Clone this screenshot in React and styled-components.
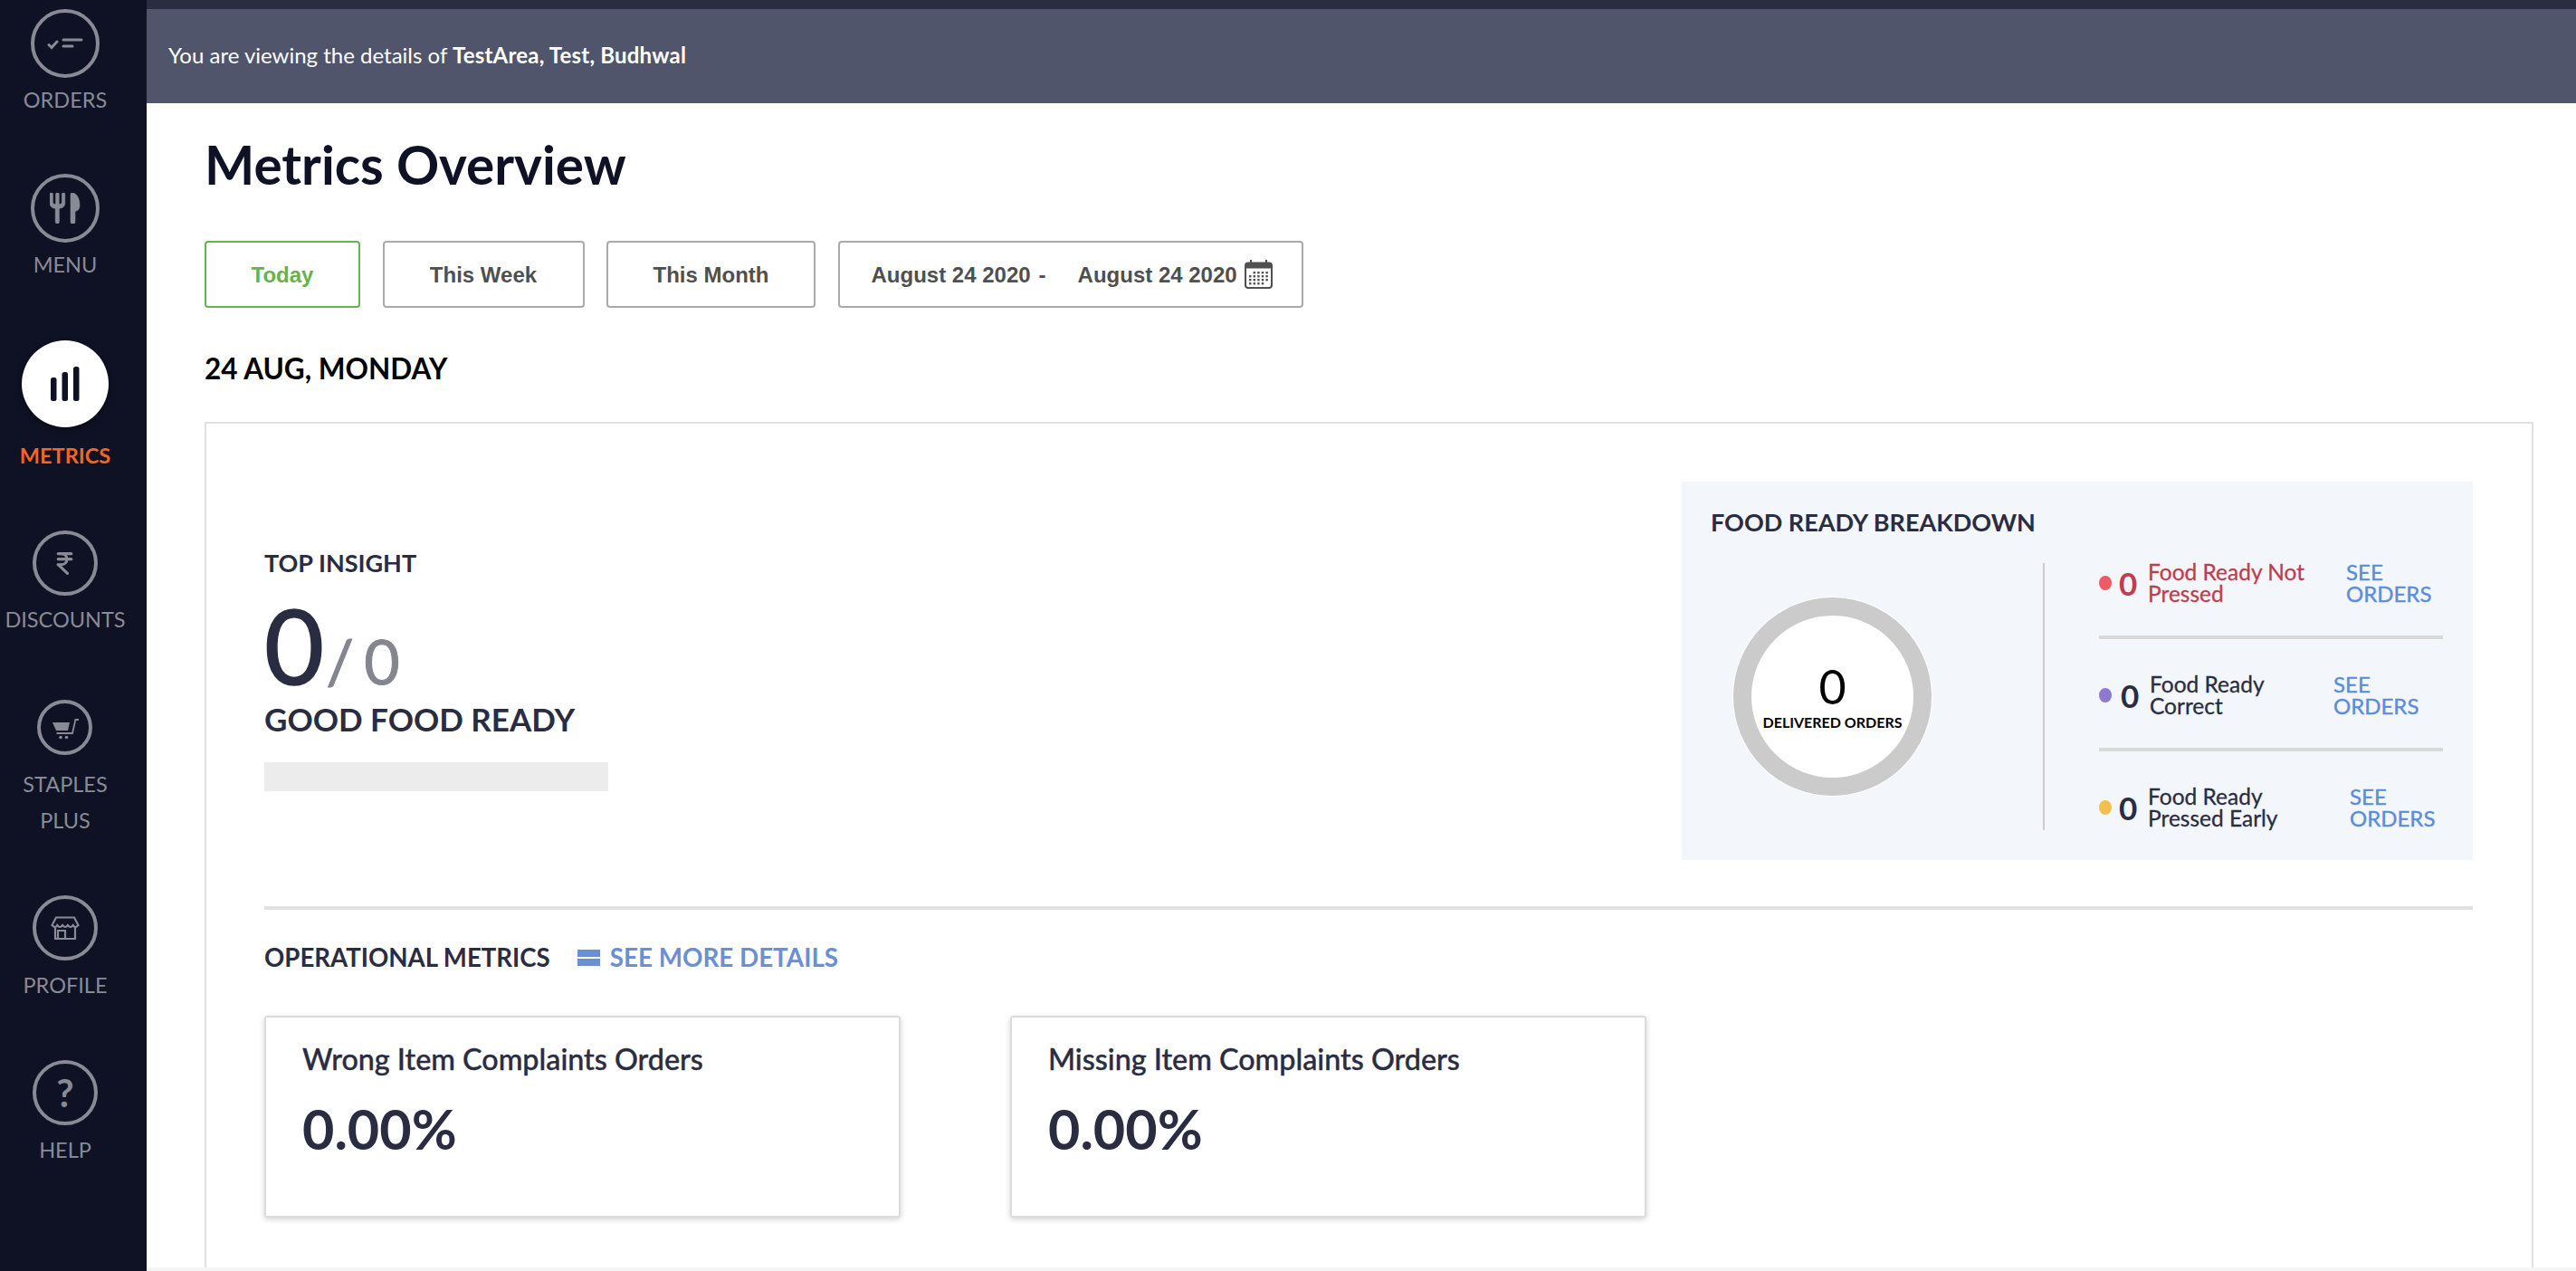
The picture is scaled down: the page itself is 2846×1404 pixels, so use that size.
import React from "react";
import styled, { createGlobalStyle } from "styled-components";
import { IndianRupee } from "lucide-react";

const SANS = `Lato, "Noto Sans", sans-serif`;
const ARIAL = `"Liberation Sans", Arial, sans-serif`;
const INK = "#2a2d42";
const NAV = "#888a95";
const LINK = "#5b8ddb";

const GlobalStyle = createGlobalStyle`
  html, body {
    margin: 0;
    padding: 0;
    background: #fff;
  }
  * {
    box-sizing: border-box;
  }
`;

function OrdersIcon() {
  return (
    <svg width="40" height="16" viewBox="0 0 40 16" fill="none" stroke={NAV} strokeLinecap="round">
      <path d="M2 9.5l3 3 6-6.5" strokeWidth="3" />
      <path d="M18 4h20M18 11h10" strokeWidth="3" />
    </svg>
  );
}

function MenuIcon() {
  return (
    <svg width="34" height="34" viewBox="0 0 34 34" fill={NAV} stroke={NAV} strokeWidth="0.6">
      <path d="M0 1.5a1.7 1.7 0 0 1 3.4 0V10c0 1.6.8 2.6 3.2 2.6V1.5a1.7 1.7 0 0 1 3.6 0v11.1c2.4 0 3.2-1 3.2-2.6V1.5a1.7 1.7 0 0 1 3.4 0V11c0 4-2.4 6-6.4 6.3V32a2.1 2.1 0 0 1-4.2 0V17.3C2.4 17 0 15 0 11z" />
      <path d="M23 1.5C23 .5 23.7 0 24.5 0 29.5 0 33 6 33 13.5c0 4.5-1.8 6.5-5 6.8V32a2.5 2.5 0 0 1-5 0z" />
    </svg>
  );
}

function MetricsIcon() {
  return (
    <svg width="32" height="38" viewBox="0 0 32 38" fill="#0e1224">
      <rect x="0" y="12" width="6.5" height="26" rx="2.5" />
      <rect x="12.5" y="6" width="6.5" height="32" rx="2.5" />
      <rect x="25" y="0" width="6.5" height="38" rx="2.5" />
    </svg>
  );
}

function RupeeIcon() {
  return <IndianRupee size={29} color={NAV} strokeWidth={2.6} />;
}

function CartIcon() {
  return (
    <svg width="32" height="26" viewBox="0 0 32 26" fill={NAV}>
      <path d="M2 7h19l-2 9H6z" />
      <path d="M6.5 19H24l3.4-15H31" fill="none" stroke={NAV} strokeWidth="1.8" />
      <circle cx="11" cy="23.5" r="1.8" />
      <circle cx="17.5" cy="23.5" r="1.8" />
    </svg>
  );
}

function StoreIcon() {
  return (
    <svg width="32" height="28" viewBox="0 0 32 28" fill="none" stroke={NAV} strokeWidth="2.2">
      <path d="M6 2.5h20l4.5 8.5q-3.6 4-5.8 0q-2.9 4-5.8 0q-2.9 4-5.8 0q-2.9 4-5.8 0q-2.2 4-5.8 0z" />
      <path d="M5 13v13h22V13" />
      <path d="M8 26V17h8v9" />
    </svg>
  );
}

function HelpIcon() {
  return <HelpGlyph>?</HelpGlyph>;
}

function CalendarIcon() {
  const cells = [];
  for (let r = 0; r < 4; r++) {
    for (let c = 0; c < 5; c++) {
      if ((r === 0 && c === 0) || (r === 3 && c === 4)) continue;
      cells.push(<rect key={r + "-" + c} x={5 + c * 4.6} y={13 + r * 4} width="2.4" height="2.4" />);
    }
  }
  return (
    <svg width="31" height="32" viewBox="0 0 31 32" fill="#505050">
      <rect x="1" y="3.5" width="29" height="27.5" rx="3" fill="none" stroke="#505050" strokeWidth="2" />
      <rect x="1" y="3.5" width="29" height="6" rx="2" />
      <rect x="6" y="0" width="2" height="6" />
      <rect x="23" y="0" width="2" height="6" />
      {cells}
    </svg>
  );
}

function LinesIcon() {
  return (
    <svg width="25" height="18" viewBox="0 0 25 18" fill="#6a90d3">
      <rect width="25" height="8" />
      <rect y="10" width="25" height="8" />
    </svg>
  );
}

const navItems = [
  { label: ["ORDERS"], size: 76, labelGap: 4, after: 62, Icon: OrdersIcon },
  { label: ["MENU"], size: 76, labelGap: 4, after: 64, Icon: MenuIcon },
  { label: ["METRICS"], size: 96, labelGap: 11, after: 63, Icon: MetricsIcon, active: true },
  { label: ["DISCOUNTS"], size: 72, labelGap: 6, after: 69, Icon: RupeeIcon },
  { label: ["STAPLES", "PLUS"], size: 61, labelGap: 12, after: 63, Icon: CartIcon },
  { label: ["PROFILE"], size: 72, labelGap: 7, after: 63, Icon: StoreIcon },
  { label: ["HELP"], size: 72, labelGap: 7, after: 0, Icon: HelpIcon },
];

const filters = [
  { label: "Today", width: 172, active: true },
  { label: "This Week", width: 223 },
  { label: "This Month", width: 231 },
];

const breakdown = [
  { count: 0, text: ["Food Ready Not", "Pressed"], dot: "#ee5b66", tone: "#c13c4d", textWidth: 219 },
  { count: 0, text: ["Food Ready", "Correct"], dot: "#8e79d2", tone: INK, textWidth: 203, inset: 2 },
  { count: 0, text: ["Food Ready", "Pressed Early"], dot: "#f3c04d", tone: INK, textWidth: 223 },
];

function App() {
  return (
    <Page>
      <GlobalStyle />
      <Sidebar>
        {navItems.map(({ label, size, labelGap, after, Icon, active }) => (
          <NavItem key={label[0]} $after={after}>
            <NavCircle $size={size} $active={active}><Icon /></NavCircle>
            <NavLabel $gap={labelGap} $active={active}>
              {label.map((line) => (
                <div key={line}>{line}</div>
              ))}
            </NavLabel>
          </NavItem>
        ))}
      </Sidebar>
      <Main>
        <Banner>
          <span>You are viewing the details of <strong>TestArea, Test, Budhwal</strong></span>
        </Banner>
        <Content>
          <Title>Metrics Overview</Title>
          <Filters>
            {filters.map((f) => (
              <FilterButton key={f.label} $width={f.width} $active={f.active}>{f.label}</FilterButton>
            ))}
            <DateRange>
              <span>August 24 2020</span>
              <DateDash>-</DateDash>
              <DateEnd>August 24 2020</DateEnd>
              <CalendarSlot><CalendarIcon /></CalendarSlot>
            </DateRange>
          </Filters>
          <DateHeading>24 AUG, MONDAY</DateHeading>
          <Board>
            <TopRow>
              <Insight>
                <SectionTitle>TOP INSIGHT</SectionTitle>
                <Score>
                  <ScoreValue>0</ScoreValue>
                  <ScoreTotal>/ 0</ScoreTotal>
                </Score>
                <ScoreName>GOOD FOOD READY</ScoreName>
                <ScoreBar />
              </Insight>
              <BreakdownPanel>
                <SectionTitle>FOOD READY BREAKDOWN</SectionTitle>
                <BreakdownBody>
                  <DonutColumn>
                    <Donut>
                      <DonutValue>0</DonutValue>
                      <DonutCaption>DELIVERED ORDERS</DonutCaption>
                    </Donut>
                  </DonutColumn>
                  <BreakdownRows>
                    {breakdown.map((row, i) => (
                      <React.Fragment key={row.text[1]}>
                        {i > 0 && <RowRule />}
                        <BreakdownRow $tone={row.tone}>
                          <Dot $color={row.dot} />
                          <RowCount $inset={row.inset}>{row.count}</RowCount>
                          <RowText $width={row.textWidth}>
                            {row.text[0]}<br />{row.text[1]}
                          </RowText>
                          <SeeOrders>SEE<br />ORDERS</SeeOrders>
                        </BreakdownRow>
                      </React.Fragment>
                    ))}
                  </BreakdownRows>
                </BreakdownBody>
              </BreakdownPanel>
            </TopRow>
            <SectionRule />
            <OpsHeader>
              <OpsTitle>OPERATIONAL METRICS</OpsTitle>
              <MoreDetails>
                <LinesIcon />
                SEE MORE DETAILS
              </MoreDetails>
            </OpsHeader>
            <MetricCards>
              <MetricCard>
                <MetricName>Wrong Item Complaints Orders</MetricName>
                <MetricValue>0.00%</MetricValue>
              </MetricCard>
              <MetricCard>
                <MetricName>Missing Item Complaints Orders</MetricName>
                <MetricValue>0.00%</MetricValue>
              </MetricCard>
            </MetricCards>
          </Board>
        </Content>
        <BottomStrip />
      </Main>
    </Page>
  );
}

const Page = styled.div`
  display: flex;
  width: 100%;
  height: 1404px;
  overflow: hidden;
  font-family: ${SANS};
`;

const Sidebar = styled.nav`
  flex: 0 0 162px;
  display: flex;
  flex-direction: column;
  align-items: center;
  padding: 10px 18px 0 0;
  background: #0e1224;
`;

const NavItem = styled.div`
  display: flex;
  flex-direction: column;
  align-items: center;
  margin-bottom: ${(p) => p.$after}px;
`;

const NavCircle = styled.div`
  display: flex;
  align-items: center;
  justify-content: center;
  width: ${(p) => p.$size}px;
  height: ${(p) => p.$size}px;
  border-radius: 50%;
  border: ${(p) => (p.$active ? "none" : `4.5px solid ${NAV}`)};
  background: ${(p) => (p.$active ? "#fff" : "transparent")};
  box-shadow: ${(p) => (p.$active ? "0 2px 6px rgba(0,0,0,.5)" : "none")};
`;

const NavLabel = styled.div`
  margin-top: ${(p) => p.$gap}px;
  font-size: 23.5px;
  line-height: 40px;
  text-align: center;
  color: ${(p) => (p.$active ? "#f26522" : NAV)};
  font-weight: ${(p) => (p.$active ? 700 : 400)};
`;

const HelpGlyph = styled.span`
  font-size: 42px;
  line-height: 1;
  font-weight: 700;
  color: ${NAV};
`;

const Main = styled.main`
  flex: 1;
  min-width: 0;
  display: flex;
  flex-direction: column;
`;

const Banner = styled.div`
  flex: 0 0 114px;
  display: flex;
  align-items: center;
  padding: 0 0 4px 24px;
  border-top: 10px solid #2a2d42;
  background: #50556b;
  color: #fff;
  font-size: 24px;

  strong {
    font-weight: 700;
    letter-spacing: 0.2px;
  }
`;

const Content = styled.div`
  flex: 1;
  min-height: 0;
  overflow: hidden;
  padding: 32px 47px 0 64px;
`;

const Title = styled.h1`
  margin: 0;
  font-size: 58.5px;
  line-height: 70px;
  font-weight: 700;
  color: #0e1224;
`;

const Filters = styled.div`
  display: flex;
  gap: 24.5px;
  margin-top: 50px;
`;

const FilterButton = styled.button`
  width: ${(p) => p.$width}px;
  height: 74px;
  padding: 2px 0 0;
  border: 2px solid ${(p) => (p.$active ? "#66b34d" : "#aaa")};
  border-radius: 4px;
  background: #fff;
  color: ${(p) => (p.$active ? "#66b34d" : "#4f4f4f")};
  font: 700 24px ${ARIAL};
`;

const DateRange = styled.div`
  display: flex;
  align-items: center;
  width: 514px;
  height: 74px;
  padding: 2px 0 0 35px;
  border: 2px solid #aaa;
  border-radius: 4px;
  color: #4f4f4f;
  font: 700 24px ${ARIAL};
`;

const DateDash = styled.span`
  margin-left: 9px;
`;

const DateEnd = styled.span`
  margin-left: 35px;
`;

const CalendarSlot = styled.span`
  display: flex;
  margin: -2px 0 0 8px;
`;

const DateHeading = styled.div`
  margin-top: 47px;
  font-size: 31.5px;
  line-height: 40px;
  font-weight: 700;
  color: #000;
`;

const Board = styled.section`
  min-height: 960px;
  margin-top: 39px;
  padding: 64px 65px 0 64px;
  border: 2px solid #e0e0e0;
`;

const TopRow = styled.div`
  display: flex;
  justify-content: space-between;
  align-items: flex-start;
`;

const Insight = styled.div`
  padding-top: 73px;
`;

const SectionTitle = styled.div`
  font-size: 27px;
  line-height: 34px;
  font-weight: 700;
  color: ${INK};
`;

const OpsTitle = styled(SectionTitle)`
  font-size: 27.6px;
`;

const Score = styled.div`
  display: flex;
  align-items: baseline;
  height: 135px;
  line-height: 145px;
`;

const ScoreValue = styled.span`
  font-size: 114px;
  color: ${INK};
  -webkit-text-stroke: 1.5px ${INK};
`;

const ScoreTotal = styled.span`
  margin-left: 2px;
  font-size: 68px;
  word-spacing: -6px;
  color: #84868f;
  -webkit-text-stroke: 1px #84868f;
`;

const ScoreName = styled.div`
  font-size: 35px;
  line-height: 40px;
  font-weight: 700;
  color: ${INK};
`;

const ScoreBar = styled.div`
  width: 380px;
  height: 32px;
  margin-top: 28px;
  background: #ececec;
`;

const BreakdownPanel = styled.div`
  width: 874px;
  height: 418px;
  padding: 28px 0 0 32px;
  background: #f3f6fb;
`;

const BreakdownBody = styled.div`
  display: flex;
  align-items: center;
  height: 295px;
  margin-top: 28px;
`;

const DonutColumn = styled.div`
  flex: 0 0 369px;
  height: 100%;
  display: flex;
  align-items: center;
  padding-left: 25px;
  border-right: 2px solid #ccc;
`;

const Donut = styled.div`
  display: flex;
  flex-direction: column;
  align-items: center;
  justify-content: center;
  width: 219px;
  height: 219px;
  border-radius: 50%;
  border: 20px solid #cbcbcb;
  background: #fff;
  box-shadow: 0 0 0 1px #fff;
`;

const DonutValue = styled.div`
  font-size: 52px;
  line-height: 52px;
  color: #000;
`;

const DonutCaption = styled.div`
  margin-top: 4px;
  font-size: 16px;
  line-height: 20px;
  font-weight: 700;
  color: #000;
  white-space: nowrap;
`;

const BreakdownRows = styled.div`
  flex: 0 0 380px;
  margin-left: 60px;
  padding-bottom: 3px;
`;

const RowRule = styled.div`
  height: 4px;
  margin: 8px 0 12px;
  background: #d8d8d8;
`;

const BreakdownRow = styled.div`
  display: flex;
  align-items: center;
  height: 100px;
  color: ${(p) => p.$tone};
`;

const Dot = styled.span`
  flex: 0 0 14px;
  height: 16px;
  border-radius: 50%;
  background: ${(p) => p.$color};
`;

const RowCount = styled.span`
  flex: 0 0 21px;
  margin-left: ${(p) => 8 + (p.$inset || 0)}px;
  font-size: 35px;
  font-weight: 700;
`;

const RowText = styled.span`
  flex: 0 0 ${(p) => p.$width}px;
  margin-left: 11px;
  font-size: 24.5px;
  line-height: 24px;
  -webkit-text-stroke: 0.3px currentColor;
`;

const SeeOrders = styled.span`
  font-size: 24px;
  line-height: 24px;
  color: ${LINK};
  -webkit-text-stroke: 0.4px currentColor;
`;

const SectionRule = styled.div`
  height: 4px;
  margin-top: 51px;
  background: #e2e2e2;
`;

const OpsHeader = styled.div`
  display: flex;
  align-items: center;
  gap: 30px;
  margin-top: 36px;
`;

const MoreDetails = styled.a`
  display: flex;
  align-items: center;
  gap: 11px;
  font-size: 27.8px;
  line-height: 34px;
  font-weight: 700;
  color: #6a90d3;
`;

const MetricCards = styled.div`
  display: flex;
  gap: 121px;
  margin-top: 47px;
`;

const MetricCard = styled.div`
  width: 703px;
  height: 223px;
  padding: 26px 0 0 40px;
  border: 2px solid #dcdcdc;
  border-radius: 3px;
  box-shadow: 0 2px 6px rgba(0, 0, 0, 0.18);
`;

const MetricName = styled.div`
  font-size: 32.3px;
  line-height: 40px;
  font-weight: 500;
  color: ${INK};
  -webkit-text-stroke: 0.4px currentColor;
`;

const MetricValue = styled.div`
  margin-top: 22px;
  font-size: 61px;
  line-height: 70px;
  font-weight: 700;
  color: ${INK};
`;

const BottomStrip = styled.div`
  flex: 0 0 4px;
  background: #f5f5f5;
`;

export default App;
